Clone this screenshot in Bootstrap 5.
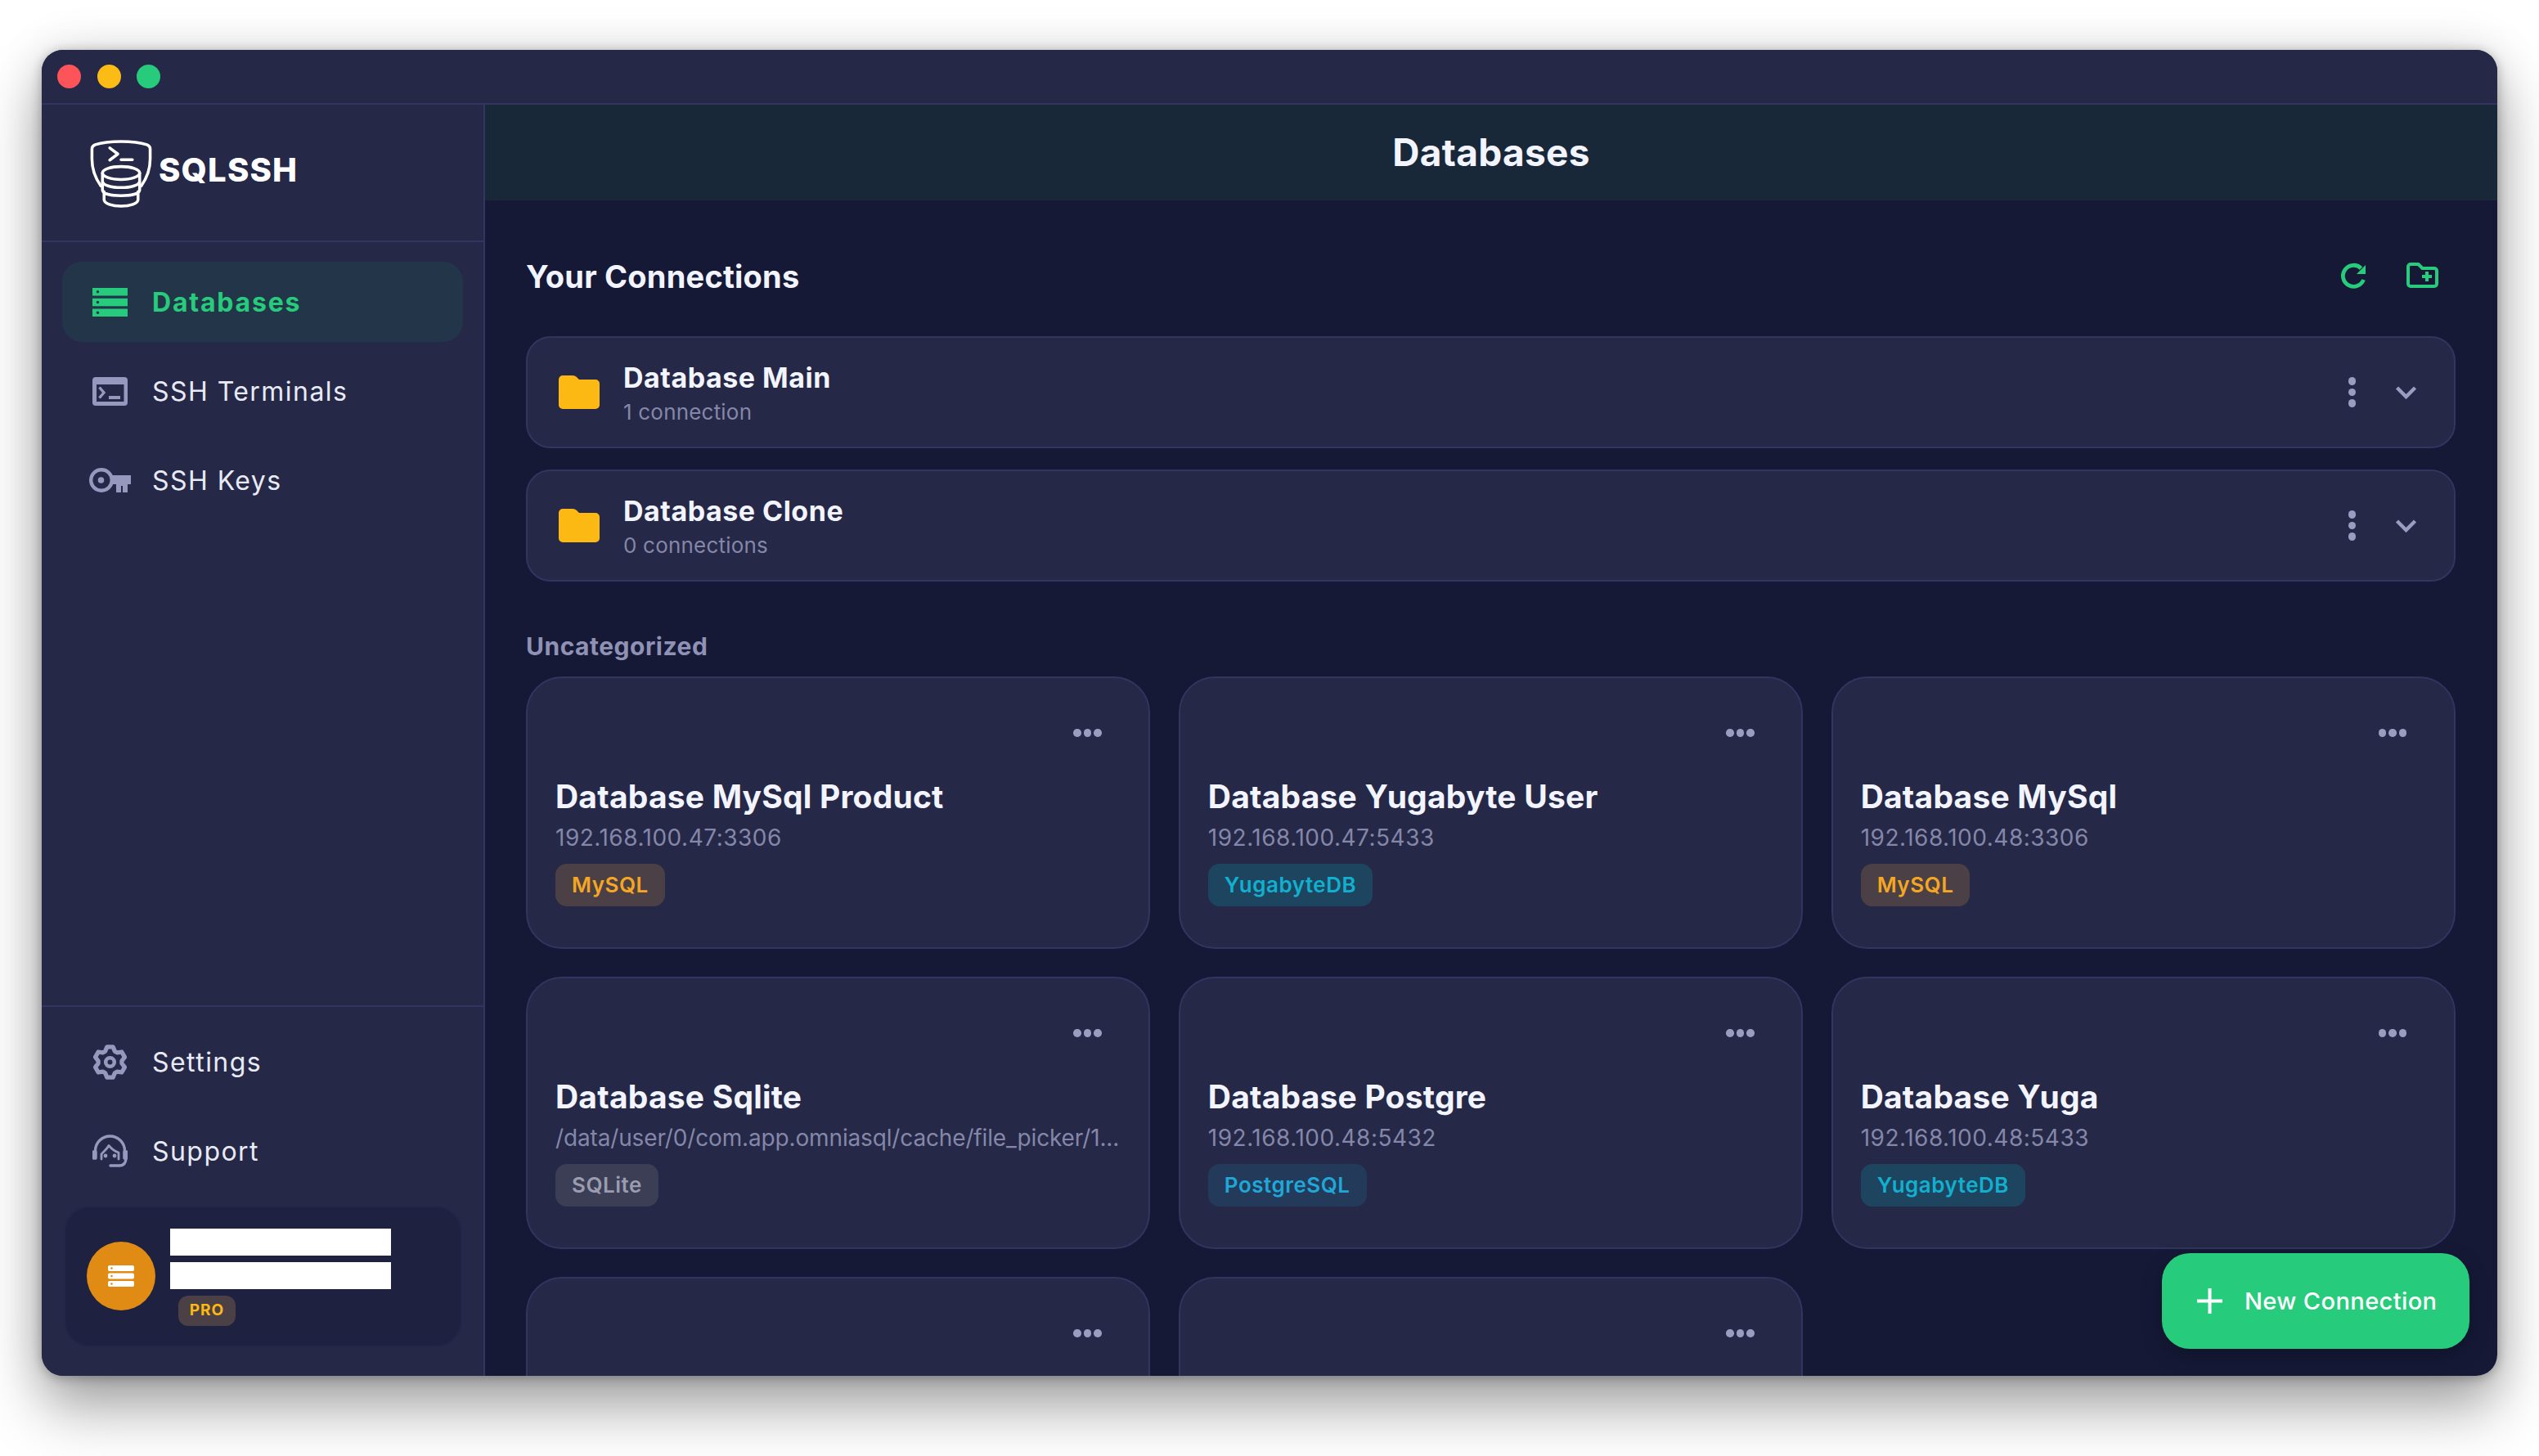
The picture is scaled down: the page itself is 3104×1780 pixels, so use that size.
<!DOCTYPE html>
<html lang="en">
<head>
<meta charset="UTF-8">
<title>SQLSSH - Databases</title>
<link href="https://cdn.jsdelivr.net/npm/bootstrap@5.3.0/dist/css/bootstrap.min.css" rel="stylesheet">
<style>
  body { margin: 0; background: #fff; font-family: "Inter", "Liberation Sans", sans-serif; overflow: hidden; }
  .stage { padding: 61px 51px 0; height: 1780px; }
  .app-window { height: 1621px; border-radius: 26px; background: #151936; overflow: hidden; position: relative; }
  .shadow-wrap { border-radius: 26px; box-shadow: 0 0 60px rgba(0,0,0,.12), 0 2px 14px rgba(0,0,0,.28), 0 40px 70px rgba(0,0,0,.34); }
  .title-bar { height: 67px; background: #252846; border-bottom: 2px solid #323560; padding-left: 19px; gap: 19.5px; }
  .light { width: 29px; height: 29px; border-radius: 50%; }
  .side { width: 542px; background: #252846; border-right: 2px solid #323560; }
  .side-head { height: 168px; border-bottom: 2px solid #323560; padding: 43px 0 0 59px; gap: 8px; }
  .logo-text { font-weight: 800; font-size: 40px; letter-spacing: 1.2px; color: #fff; line-height: 1; margin-top: 17px; }
  .side-nav { padding: 24px 25px 0; gap: 11px; }
  .nav-item-x { height: 98px; border-radius: 24px; padding: 0 0 0 33px; gap: 26px; color: #e8eaf6; font-size: 32px; letter-spacing: 1.45px; font-weight: 400; }
  .nav-item-x:hover { color: #e8eaf6; }
  .nav-item-x.on { background: #233549; color: #27cb7c; font-weight: 700; letter-spacing: 1.8px; }
  .nav-txt { margin-top: 2px; }
  .nav-ico { width: 51px; flex: none; }
  .side-foot { border-top: 2px solid #323560; padding: 18px 25px 35px; gap: 11px; }
  .user-box { margin-top: 7px; height: 173px; margin-left: 2px; margin-right: 1px; border-radius: 32px; background: #1e2140; border: 2px solid #232648; padding-left: 26px; padding-right: 20px; }
  .avatar { width: 84px; height: 84px; border-radius: 50%; background: #e08c14; flex: none; margin-top: 42px; }
  .blank-bar { width: 270px; height: 33px; background: #fff; }
  .pro-tag { width: 70px; height: 37px; border-radius: 12px; background: #4a4046; color: #fdb913; font-size: 19px; font-weight: 700; letter-spacing: 1px; margin-left: 10px; }
  .user-lines { padding-top: 26px; margin-left: 18px; gap: 8px; }
  .main-pane { min-width: 0; }
  .main-head { height: 117px; background: #192838; color: #f2f4ff; font-size: 46px; font-weight: 700; letter-spacing: .3px; }
  .main-body { padding: 0 51px 0 50px; }
  .sect-head { height: 40px; margin-top: 73px; margin-bottom: 53px; }
  .sect-title { font-size: 38px; font-weight: 700; color: #f2f4ff; letter-spacing: .2px; }
  .head-ico { margin-right: 21px; gap: 49px; margin-bottom: 3px; }
  .folder-row { height: 137px; background: #252846; border: 2px solid #323560; border-radius: 30px; padding: 0 45px 0 38px; margin-bottom: 26px; gap: 29px; }
  .folder-name { font-size: 34px; font-weight: 700; color: #f2f4ff; line-height: 44px; letter-spacing: .5px; }
  .folder-sub { font-size: 26px; color: #8487a9; line-height: 36px; letter-spacing: .2px; margin-top: 2px; margin-bottom: -2px; }
  .dot-v { gap: 4px; margin-right: 19px; }
  .dot { width: 9.5px; height: 9.5px; border-radius: 50%; background: #9a9dc2; }
  .dot-h { gap: 3px; margin: 62px 23.5px 0 auto; }
  .cat-label { font-size: 30px; font-weight: 700; color: #8f92b5; line-height: 36px; margin-top: 61px; margin-bottom: 19px; letter-spacing: .5px; }
  .conn-grid { display: grid; grid-template-columns: repeat(3, 1fr); gap: 34px 34.5px; }
  .conn-card { height: 333px; background: #252846; border: 2px solid #323560; border-radius: 44px; padding: 0 34px; min-width: 0; color: #f2f4ff; }
  .conn-name { font-size: 39px; font-weight: 700; line-height: 48px; margin-top: 49px; color: #f2f4ff; letter-spacing: .2px; }
  .conn-host { font-size: 28px; line-height: 36px; margin-top: 8px; color: #8487a9; letter-spacing: .5px; }
  .conn-path { letter-spacing: -.15px; }
  .db-tag { display: inline-flex; align-items: center; height: 52px; padding: 0 20px; border-radius: 14px; font-size: 26px; font-weight: 600; letter-spacing: .5px; margin-top: 14px; line-height: 1; }
  .tag-mysql { background: #4a4046; color: #f5a623; }
  .tag-yuga { background: #1e4560; color: #12afcf; }
  .tag-pg { background: #243a5a; color: #1fa7d8; }
  .tag-lite { background: #3c3e55; color: #9a9cb0; }
  .fab { position: absolute; right: 34px; bottom: 33px; width: 376px; height: 117px; border-radius: 34px; background: #27cb7c; color: #fff; border: 0; font-size: 29px; font-weight: 500; gap: 27px; padding-left: 43px; box-shadow: 0 8px 24px rgba(0,0,0,.25); letter-spacing: .4px; }
  .fab:hover { background: #27cb7c; color: #fff; }
</style>
</head>
<body>
<div class="stage">
  <div class="shadow-wrap">
    <div class="app-window d-flex flex-column">
      <div class="title-bar d-flex align-items-center flex-shrink-0">
        <span class="light" style="background:#fd5459"></span>
        <span class="light" style="background:#fdbb16"></span>
        <span class="light" style="background:#27cb7c"></span>
      </div>
      <div class="d-flex flex-grow-1" style="min-height:0">
        <aside class="side d-flex flex-column flex-shrink-0">
          <div class="side-head d-flex align-items-start">
            <svg width="76" height="83" viewBox="0 0 76 84" fill="none" stroke="#fff" stroke-width="3.6" stroke-linecap="round" stroke-linejoin="round">
              <path d="M13 57C6 47 2 36 2 24V11C2 8 4 7 6 6C15 3 26 2 38 2C50 2 61 3 70 6C72.500 7 74 8 74 11V24C74 36 70 47 63 57"/>
              <path d="M24 10L34 17.500L24 25M38 24.500H52"/>
              <ellipse cx="38" cy="41" rx="23" ry="8"/>
              <path d="M15 41V55M61 41V55M15 51C15 56 26 59 38 59C50 59 61 56 61 51M15 55V62C15 67 26 69 38 69C50 69 61 67 61 62V55M17 64V74C17 79 27 82 38 82C49 82 59 79 59 74V64"/>
            </svg>
            <span class="logo-text">SQLSSH</span>
          </div>
          <nav class="side-nav nav flex-column">
            <a class="nav-link nav-item-x on d-flex align-items-center" href="#">
              <span class="nav-ico d-flex justify-content-center">
                <svg width="43" height="35" viewBox="0 0 43 35"><g fill="#27cb7c"><rect width="43" height="9.500"/><rect y="12.800" width="43" height="9.500"/><rect y="25.500" width="43" height="9.500"/></g><g fill="#233549"><circle cx="6.500" cy="4.800" r="1.700"/><circle cx="6.500" cy="17.500" r="1.700"/><circle cx="6.500" cy="30.200" r="1.700"/></g></svg>
              </span><span class="nav-txt">Databases</span>
            </a>
            <a class="nav-link nav-item-x d-flex align-items-center" href="#">
              <span class="nav-ico d-flex justify-content-center">
                <svg width="43" height="35" viewBox="0 0 43 35"><rect width="43" height="35" rx="4" fill="#9699bd"/><rect x="5" y="9" width="33.500" height="21" fill="#252846"/><path d="M8.500 12.500L14 19L8.500 25.500" fill="none" stroke="#9699bd" stroke-width="3.400"/><rect x="20" y="23" width="14" height="4" fill="#9699bd"/></svg>
              </span><span class="nav-txt">SSH Terminals</span>
            </a>
            <a class="nav-link nav-item-x d-flex align-items-center" href="#">
              <span class="nav-ico d-flex justify-content-center">
                <svg width="51" height="30" viewBox="0 0 51 30" fill="none"><circle cx="15" cy="15" r="12.800" stroke="#9699bd" stroke-width="4.400"/><circle cx="14.500" cy="15" r="3.800" fill="#9699bd"/><path d="M27 9H51V20H47V30H41V22H39V30H33V20H27Z" fill="#9699bd"/></svg>
              </span><span class="nav-txt">SSH Keys</span>
            </a>
          </nav>
          <div class="side-foot mt-auto d-flex flex-column">
            <a class="nav-link nav-item-x d-flex align-items-center" href="#">
              <span class="nav-ico d-flex justify-content-center">
                <svg width="43" height="43" viewBox="-21.500 -21.500 43 43" fill="none"><path d="M-5.900-13.250L-3.630-18.650H3.630L5.900-13.250L8.520-11.730L14.340-12.470L17.960-6.190L14.420-1.520V1.520L17.960 6.190L14.340 12.470L8.520 11.730L5.900 13.250L3.630 18.650H-3.630L-5.900 13.250L-8.520 11.730L-14.340 12.470L-17.960 6.190L-14.420 1.520V-1.520L-17.960-6.190L-14.340-12.470L-8.520-11.730Z" stroke="#9699bd" stroke-width="5.300" stroke-linejoin="round"/><circle r="5.300" stroke="#9699bd" stroke-width="4.600"/></svg>
              </span><span class="nav-txt">Settings</span>
            </a>
            <a class="nav-link nav-item-x d-flex align-items-center" href="#">
              <span class="nav-ico d-flex justify-content-center">
                <svg width="43" height="40" viewBox="0 0 43 40" fill="none" stroke="#9699bd" stroke-width="3.400" stroke-linecap="round" stroke-linejoin="round"><path d="M3.500 27V20A18 18 0 0 1 39.500 20V27"/><path d="M11 30V24C13 21 17 19 20 13.500C24 18 28 21 32 22V30" stroke-width="2.800"/><path d="M1.500 21V29H4V21ZM39 21V29H41.500V21Z" fill="#9699bd"/><path d="M41 29C41 34 38.500 38 33 38H22"/><circle cx="16" cy="26" r="2.400" fill="#9699bd" stroke="none"/><circle cx="27" cy="26" r="2.400" fill="#9699bd" stroke="none"/></svg>
              </span><span class="nav-txt">Support</span>
            </a>
            <div class="user-box d-flex align-items-start">
              <div class="avatar d-flex align-items-center justify-content-center">
                <svg width="32" height="26" viewBox="0 0 32 26"><g fill="#fff"><rect width="32" height="7" rx="2"/><rect y="9.500" width="32" height="7" rx="2"/><rect y="19" width="32" height="7" rx="2"/></g><g fill="#e08c14"><circle cx="4.500" cy="3.500" r="1.300"/><circle cx="4.500" cy="13" r="1.300"/><circle cx="4.500" cy="22.500" r="1.300"/></g></svg>
              </div>
              <div class="user-lines d-flex flex-column">
                <div class="blank-bar"></div>
                <div class="blank-bar"></div>
                <div class="pro-tag d-flex align-items-center justify-content-center">PRO</div>
              </div>
            </div>
          </div>
        </aside>
        <main class="main-pane d-flex flex-column flex-grow-1">
          <div class="main-head d-flex align-items-center justify-content-center flex-shrink-0">Databases</div>
          <div class="main-body">
            <div class="sect-head d-flex align-items-center justify-content-between">
              <span class="sect-title">Your Connections</span>
              <span class="head-ico d-flex align-items-center">
                <svg width="31" height="32" viewBox="0 0 31 32" fill="none"><path d="M27.500 21A13 13 0 1 1 24.500 7" stroke="#27cb7c" stroke-width="4.800"/><path d="M30 3V14H19Z" fill="#27cb7c"/></svg>
                <svg width="39" height="31" viewBox="0 0 39 31" fill="none" stroke="#27cb7c"><path d="M2 5A3 3 0 0 1 5 2H14.500L19.500 7H34A3 3 0 0 1 37 10V26A3 3 0 0 1 34 29H5A3 3 0 0 1 2 26Z" stroke-width="4" stroke-linejoin="round"/><path d="M25 11V23M19 17H31" stroke-width="4"/></svg>
              </span>
            </div>

            <div class="folder-row d-flex align-items-center">
              <svg width="50" height="41" viewBox="0 0 50 41"><path d="M5 0H17Q20 0 22 2L25 5H45A5 5 0 0 1 50 10V36A5 5 0 0 1 45 41H5A5 5 0 0 1 0 36V5A5 5 0 0 1 5 0Z" fill="#fdb913"/></svg>
              <div class="flex-grow-1">
                <div class="folder-name">Database Main</div>
                <div class="folder-sub">1 connection</div>
              </div>
              <div class="dot-v d-flex flex-column"><span class="dot"></span><span class="dot"></span><span class="dot"></span></div>
              <svg width="27" height="17" viewBox="0 0 27 17" fill="none"><path d="M2.500 3L13.500 14L24.500 3" stroke="#9a9dc2" stroke-width="4.500"/></svg>
            </div>
            <div class="folder-row d-flex align-items-center">
              <svg width="50" height="41" viewBox="0 0 50 41"><path d="M5 0H17Q20 0 22 2L25 5H45A5 5 0 0 1 50 10V36A5 5 0 0 1 45 41H5A5 5 0 0 1 0 36V5A5 5 0 0 1 5 0Z" fill="#fdb913"/></svg>
              <div class="flex-grow-1">
                <div class="folder-name">Database Clone</div>
                <div class="folder-sub">0 connections</div>
              </div>
              <div class="dot-v d-flex flex-column"><span class="dot"></span><span class="dot"></span><span class="dot"></span></div>
              <svg width="27" height="17" viewBox="0 0 27 17" fill="none"><path d="M2.500 3L13.500 14L24.500 3" stroke="#9a9dc2" stroke-width="4.500"/></svg>
            </div>

            <div class="cat-label">Uncategorized</div>
            <div class="conn-grid">
              <div class="card conn-card">
                <div class="dot-h d-flex"><span class="dot"></span><span class="dot"></span><span class="dot"></span></div>
                <div class="conn-name">Database MySql Product</div>
                <div class="conn-host">192.168.100.47:3306</div>
                <div><span class="badge db-tag tag-mysql">MySQL</span></div>
              </div>
              <div class="card conn-card">
                <div class="dot-h d-flex"><span class="dot"></span><span class="dot"></span><span class="dot"></span></div>
                <div class="conn-name">Database Yugabyte User</div>
                <div class="conn-host">192.168.100.47:5433</div>
                <div><span class="badge db-tag tag-yuga">YugabyteDB</span></div>
              </div>
              <div class="card conn-card">
                <div class="dot-h d-flex"><span class="dot"></span><span class="dot"></span><span class="dot"></span></div>
                <div class="conn-name">Database MySql</div>
                <div class="conn-host">192.168.100.48:3306</div>
                <div><span class="badge db-tag tag-mysql">MySQL</span></div>
              </div>
              <div class="card conn-card">
                <div class="dot-h d-flex"><span class="dot"></span><span class="dot"></span><span class="dot"></span></div>
                <div class="conn-name">Database Sqlite</div>
                <div class="conn-host conn-path text-truncate">/data/user/0/com.app.omniasql/cache/file_picker/1...</div>
                <div><span class="badge db-tag tag-lite">SQLite</span></div>
              </div>
              <div class="card conn-card">
                <div class="dot-h d-flex"><span class="dot"></span><span class="dot"></span><span class="dot"></span></div>
                <div class="conn-name">Database Postgre</div>
                <div class="conn-host">192.168.100.48:5432</div>
                <div><span class="badge db-tag tag-pg">PostgreSQL</span></div>
              </div>
              <div class="card conn-card">
                <div class="dot-h d-flex"><span class="dot"></span><span class="dot"></span><span class="dot"></span></div>
                <div class="conn-name">Database Yuga</div>
                <div class="conn-host">192.168.100.48:5433</div>
                <div><span class="badge db-tag tag-yuga">YugabyteDB</span></div>
              </div>
              <div class="card conn-card">
                <div class="dot-h d-flex"><span class="dot"></span><span class="dot"></span><span class="dot"></span></div>
              </div>
              <div class="card conn-card">
                <div class="dot-h d-flex"><span class="dot"></span><span class="dot"></span><span class="dot"></span></div>
              </div>
            </div>
          </div>
        </main>
      </div>
      <button class="btn fab d-flex align-items-center">
        <svg width="31" height="31" viewBox="0 0 31 31"><path d="M15.500 0V31M0 15.500H31" stroke="#fff" stroke-width="4"/></svg>
        New Connection
      </button>
    </div>
  </div>
</div>
<script src="https://cdn.jsdelivr.net/npm/bootstrap@5.3.0/dist/js/bootstrap.bundle.min.js"></script>
</body>
</html>
